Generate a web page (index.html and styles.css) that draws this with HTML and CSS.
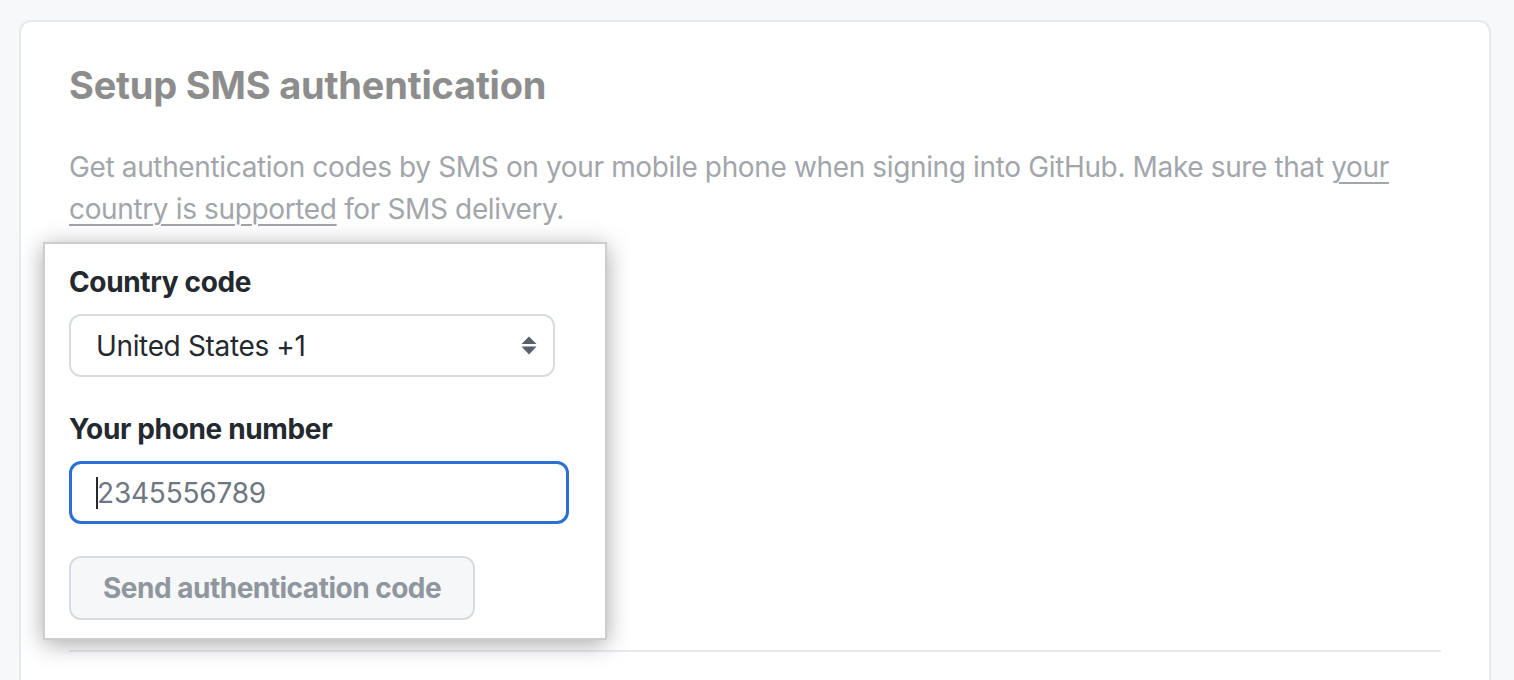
FILE: index.html
```html
<!DOCTYPE html>
<html lang="en">
<head>
<meta charset="utf-8">
<title>Setup SMS authentication</title>
<link rel="stylesheet" href="styles.css">
</head>
<body>
<div class="page">
  <section class="card">
    <h2 class="title">Setup SMS authentication</h2>
    <p class="lead">Get authentication codes by SMS on your mobile phone when signing into GitHub. Make sure that <a href="#">your country is supported</a> for SMS delivery.</p>
    <div class="focus-box">
      <div class="field">
        <label class="label">Country code</label>
        <div class="select">
          <span>United States +1</span>
          <svg class="arrows" width="16" height="20" viewBox="0 0 16 20"><path d="M8 0.5 L15.5 8 L0.5 8 Z" fill="#57606a"/><path d="M0.5 10.5 L15.5 10.5 L8 18.5 Z" fill="#57606a"/></svg>
        </div>
      </div>
      <div class="field">
        <label class="label">Your phone number</label>
        <div class="input"><span class="caret"></span><span class="value">2345556789</span></div>
      </div>
      <button class="btn" type="button">Send authentication code</button>
    </div>
    <hr class="divider">
  </section>
</div>
</body>
</html>
```

FILE: styles.css
```css
* { box-sizing: border-box; }
html, body { margin: 0; padding: 0; }
body {
  background: #f7f8fa;
  font-family: Inter, "Liberation Sans", Arial, sans-serif;
  height: 680px;
  overflow: hidden;
}
.page {
  padding: 20px 0 0 19px;
}
.card {
  width: 1472px;
  height: 760px;
  background: #ffffff;
  border: 2px solid #e7e9ed;
  border-radius: 12px;
  padding: 0 48px;
}
.title {
  margin: 39px 0 0;
  font-size: 38px;
  line-height: 48px;
  font-weight: 700;
  color: #8d8d8d;
  letter-spacing: -0.2px;
}
.lead {
  margin: 37px 0 0;
  font-size: 28px;
  line-height: 42px;
  color: #a2a6ab;
  letter-spacing: -0.36px;
}
.lead a { color: #a2a6ab; text-decoration: underline; text-underline-offset: 5px; text-decoration-thickness: 2px; }
.focus-box {
  margin: 12px 0 0 -26px;
  width: 564px;
  background: #fff;
  border: 2px solid #cdcdcd;
  box-shadow: 0 4px 22px rgba(0, 0, 0, 0.34);
  padding: 17px 24px 18px 24px;
  position: relative;
}
.field { display: flex; flex-direction: column; }
.label {
  font-size: 28px;
  line-height: 42px;
  font-weight: 700;
  color: #24292f;
  letter-spacing: -0.35px;
}
.select {
  margin-top: 11px;
  width: 486px;
  height: 63px;
  border: 2px solid #d8dce1;
  border-radius: 12px;
  display: flex;
  align-items: center;
  justify-content: space-between;
  padding: 0 16px 0 25px;
  font-size: 28px;
  color: #24292f;
  letter-spacing: -0.35px;
}
.field + .field { margin-top: 31px; }
.input {
  margin-top: 11px;
  width: 500px;
  height: 63px;
  border: 3px solid #2c6fd4;
  border-radius: 12px;
  display: flex;
  align-items: center;
  padding: 0 0 0 24px;
  font-size: 28px;
  color: #6e7781;
  letter-spacing: -0.2px;
}
.caret {
  display: inline-block;
  width: 2px;
  height: 32px;
  background: #24292f;
  margin-right: -1px;
}
.btn {
  margin-top: 32px;
  display: block;
  height: 64px;
  padding: 0 32px;
  font-family: inherit;
  font-size: 28px;
  font-weight: 700;
  color: #8f969e;
  background: #f6f7f9;
  border: 2px solid #d8dce1;
  border-radius: 12px;
  letter-spacing: -0.5px;
}
.divider {
  margin: 10px 0 0;
  border: 0;
  height: 2px;
  background: #e9e9f0;
}
```
